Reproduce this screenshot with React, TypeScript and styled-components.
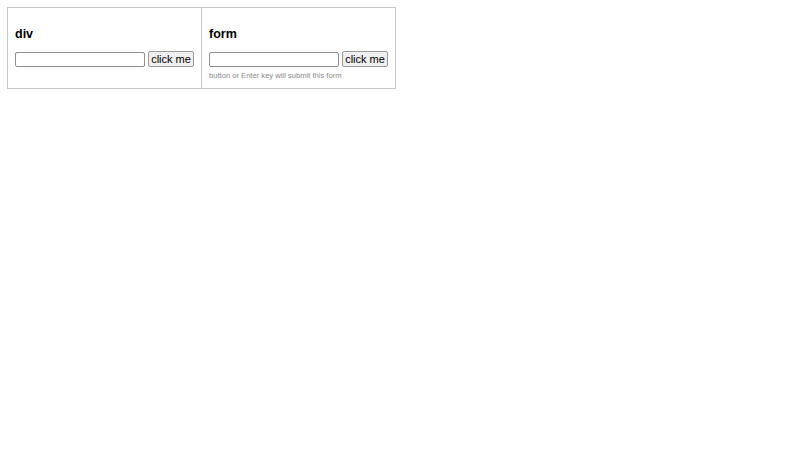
import React from "react";
import styled, { createGlobalStyle } from "styled-components";

const Global = createGlobalStyle`
  html, body { margin: 0; padding: 0; background: #fff; }
  body { font-family: "Liberation Sans", Arial, sans-serif; }
`;

const Row = styled.div`
  display: flex;
  align-items: stretch;
  padding: 7px 0 0 7px;
`;

const Panel = styled.div<{ $first?: boolean }>`
  box-sizing: border-box;
  width: 195px;
  border: 1px solid #c8c8c8;
  margin-left: ${(p) => (p.$first ? "0" : "-1px")};
  padding: 17px 7px 7px 7px;
  display: flex;
  flex-direction: column;
`;

const Title = styled.h3`
  margin: 0;
  font-size: 12.5px;
  line-height: 18px;
  font-weight: bold;
  color: #000;
`;

const Controls = styled.div`
  display: flex;
  align-items: center;
  gap: 3px;
  margin-top: 8px;
  height: 16px;
`;

const Input = styled.input`
  box-sizing: border-box;
  width: 130px;
  height: 15px;
  margin: 0;
  padding: 0 2px;
  border: 1px solid #8f8f8f;
  border-radius: 2px;
  background: #fff;
  font-family: "Liberation Sans", Arial, sans-serif;
  font-size: 11px;
`;

const Button = styled.button`
  box-sizing: border-box;
  width: 46px;
  height: 16px;
  margin: 0;
  padding: 0;
  border: 1px solid #9a9a9a;
  border-radius: 2px;
  background: #efefef;
  color: #000;
  font-family: "Liberation Sans", Arial, sans-serif;
  font-size: 11px;
  line-height: 14px;
`;

const Hint = styled.div`
  margin-top: 4px;
  font-size: 7.6px;
  line-height: 10px;
  color: #8a8a8a;
  white-space: nowrap;
`;

export default function App() {
  return (
    <>
      <Global />
      <Row>
        <Panel $first>
          <Title>div</Title>
          <Controls>
            <Input type="text" />
            <Button type="button">click me</Button>
          </Controls>
        </Panel>
        <Panel as="form" onSubmit={(e: React.FormEvent) => e.preventDefault()}>
          <Title>form</Title>
          <Controls>
            <Input type="text" />
            <Button type="submit">click me</Button>
          </Controls>
          <Hint>button or Enter key will submit this form</Hint>
        </Panel>
      </Row>
    </>
  );
}
